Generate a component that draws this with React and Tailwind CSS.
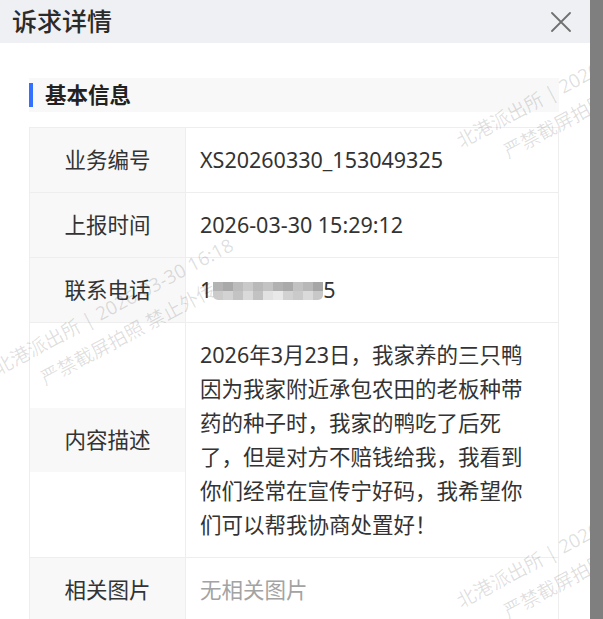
const font = { fontFamily: '"Noto Sans", "Noto Sans CJK SC", sans-serif' };

const mosaicTop = ['#b3b3b3', '#a9a9a9', '#bcbcbc', '#c9c9c9', '#b9b9b9', '#c3c3c3', '#b1b1b1', '#aaaaaa', '#c2c2c2', '#b8b8b8', '#a6a6a6'];
const mosaicBottom = ['#cbcbcb', '#d3d3d3', '#c3c3c3', '#dadada', '#c2c2c2', '#e2e2e2', '#e9e9e9', '#d2d2d2', '#cacaca', '#dadada', '#c8c8c8'];

const marks = [
  { left: 451, top: 129 },
  { left: -12, top: 356 },
  { left: 451, top: 589 }
];

function Row({ label, children, last }) {
  return (
    <div className={`flex items-center ${last ? '' : 'border-b border-[#eeeeee]'}`}>
      <div className="w-[155px] shrink-0 bg-[#f8f8f8] py-[15px] text-center leading-[34px] text-[#333333]">
        {label}
      </div>
      <div className="flex-1 self-stretch border-l border-[#eeeeee] py-[15px] pl-[14px] pr-5 leading-[34px] text-[#333333]">
        {children}
      </div>
    </div>
  );
}

function Watermark({ left, top }) {
  return (
    <div
      className="pointer-events-none absolute flex origin-top-left -rotate-[28deg] flex-col items-center whitespace-nowrap text-[19px] leading-[31px] text-black/[0.13]"
      style={{ left, top }}
    >
      <span>北港派出所 | 2026-03-30 16:18</span>
      <span>严禁截屏拍照 禁止外传</span>
    </div>
  );
}

export default function App() {
  return (
    <div className="flex h-[619px] w-[603px] overflow-hidden bg-white" style={font}>
      <div className="relative flex-1 overflow-hidden">
        <div className="flex h-[43px] items-center justify-between bg-[#eff0f4] pl-3 pr-[19px]">
          <h1 className="text-[25px] font-medium text-[#2b2b2b]">诉求详情</h1>
          <svg width="20" height="20" viewBox="0 0 20 20" fill="none" stroke="#707070" strokeWidth="1.8" strokeLinecap="round">
            <path d="M1 1 L19 19 M19 1 L1 19" />
          </svg>
        </div>

        <div className="pl-[29px] pr-[31px] pt-[35px] text-[21.5px]">
          <div className="flex h-[34px] items-center gap-3 bg-[#f8f8f8]">
            <span className="h-6 w-1 bg-[#3370ff]" />
            <span className="font-bold text-[#222222]">基本信息</span>
          </div>

          <div className="mt-[15px] border border-b-0 border-[#eeeeee]">
            <Row label="业务编号">XS20260330_153049325</Row>
            <Row label="上报时间">2026-03-30 15:29:12</Row>
            <Row label="联系电话">
              <div className="flex items-center">
                <span>1</span>
                <div className="ml-[1px] mt-[2px] flex flex-col overflow-hidden rounded-b-[5px]">
                  <div className="flex">
                    {mosaicTop.map((c, i) => (
                      <span key={i} className="h-[9px] w-[10px]" style={{ background: c }} />
                    ))}
                  </div>
                  <div className="flex">
                    {mosaicBottom.map((c, i) => (
                      <span key={i} className="h-[9px] w-[10px]" style={{ background: c }} />
                    ))}
                  </div>
                </div>
                <span>5</span>
              </div>
            </Row>
            <Row label="内容描述">
              2026年3月23日，我家养的三只鸭因为我家附近承包农田的老板种带药的种子时，我家的鸭吃了后死了，但是对方不赔钱给我，我看到你们经常在宣传宁好码，我希望你们可以帮我协商处置好！
            </Row>
            <Row label="相关图片" last>
              <span className="text-[#a3a3a3]">无相关图片</span>
            </Row>
          </div>
        </div>

        {marks.map((m, i) => (
          <Watermark key={i} left={m.left} top={m.top} />
        ))}
      </div>
      <div className="w-[13px] shrink-0 bg-[#7f7f7f]" />
    </div>
  );
}
